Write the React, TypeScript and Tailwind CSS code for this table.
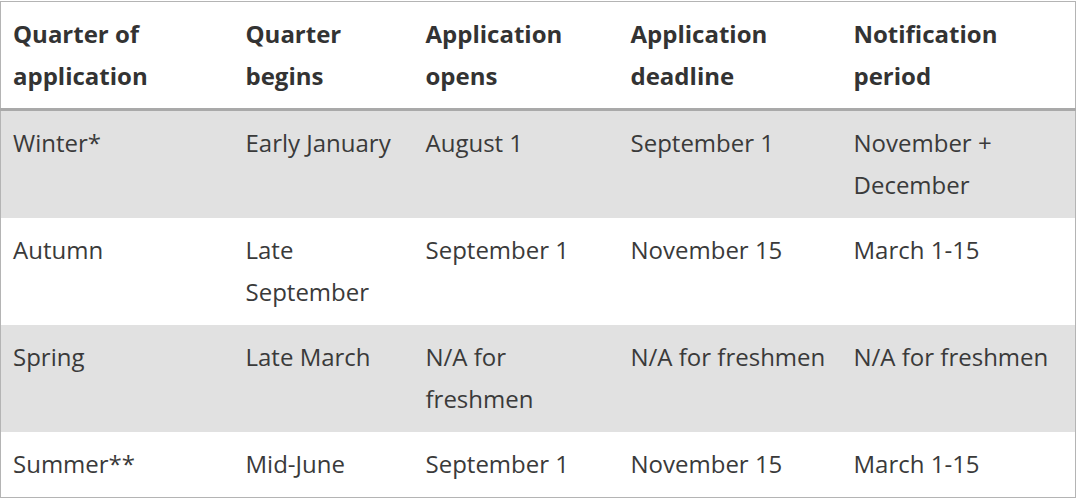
const HEAD = [
  ['Quarter of', 'application'],
  ['Quarter', 'begins'],
  ['Application', 'opens'],
  ['Application', 'deadline'],
  ['Notification', 'period'],
];

const ROWS = [
  ['Winter*', 'Early January', 'August 1', 'September 1', 'November + December'],
  ['Autumn', 'Late September', 'September 1', 'November 15', 'March 1-15'],
  ['Spring', 'Late March', 'N/A for freshmen', 'N/A for freshmen', 'N/A for freshmen'],
  ['Summer**', 'Mid-June', 'September 1', 'November 15', 'March 1-15'],
];

const WIDTHS = ['w-[233px]', 'w-[180px]', 'w-[205px]', 'w-[223px]', 'w-[234px]'];

export default function App() {
  return (
    <div className="bg-white pt-px" style={{ fontFamily: '"Open Sans", sans-serif' }}>
      <table className="w-[1076px] table-fixed border-collapse border border-[#b4b4b4] text-[24px] leading-[42px] text-[#3a3a3a]">
        <thead>
          <tr className="border-b-[3px] border-[#a9a9a9]">
            {HEAD.map((h, i) => (
              <th key={i} className={`${WIDTHS[i]} px-3 py-[11px] text-left align-top font-bold text-[#333]`}>
                {h[0]}
                <br />
                {h[1]}
              </th>
            ))}
          </tr>
        </thead>
        <tbody>
          {ROWS.map((r, ri) => (
            <tr key={ri} className={ri % 2 === 0 ? 'bg-[#e1e1e1]' : 'bg-white'}>
              {r.map((c, ci) => (
                <td key={ci} className="px-3 pt-[11px] pb-[12px] align-top">
                  {c}
                </td>
              ))}
            </tr>
          ))}
        </tbody>
      </table>
    </div>
  );
}
